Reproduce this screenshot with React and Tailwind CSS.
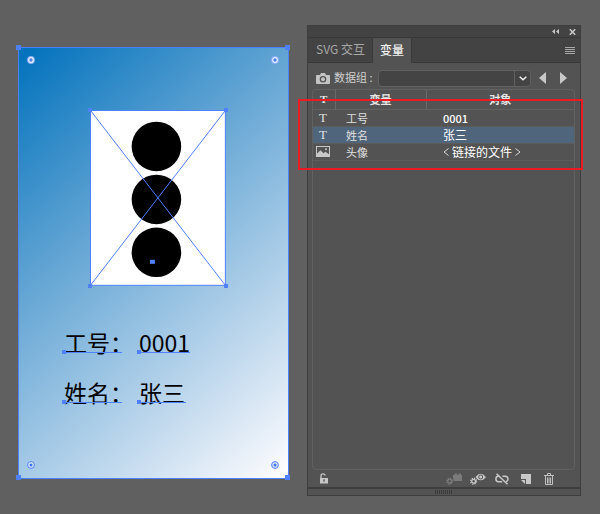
const ROWS = [
  { type: 'text', name: '工号', value: '0001', valueClass: 'font-medium text-[11px]', rowClass: '' },
  { type: 'text', name: '姓名', value: '张三', valueClass: 'text-[12px]', rowClass: 'bg-[#4f657c]' },
  { type: 'image', name: '头像', value: '链接的文件', valueClass: 'text-[12px]', rowClass: '' },
];

const FIELDS = [
  { label: '工号', value: '0001', lineClass: 'w-[51px]' },
  { label: '姓名', value: '张三', lineClass: 'w-[47px]' },
];

function Handle({ className, sizeClass = 'size-[5px]' }) {
  return <span className={'absolute bg-[#4f80ff] ' + sizeClass + ' ' + className} />;
}

function CornerWidget({ className, dot }) {
  return (
    <svg className={'absolute size-2 ' + className} viewBox="0 0 8 8" aria-hidden="true">
      {dot ? (
        <>
          <circle cx="4" cy="4" r="3.4" fill="#dce7ff" stroke="#4f80ff" strokeWidth="1" />
          <circle cx="4" cy="4" r="1.5" fill="#3f74f0" />
        </>
      ) : (
        <>
          <circle cx="4" cy="4" r="3.9" fill="#8fb0ff" />
          <circle cx="4" cy="4" r="2.3" fill="#4f80e8" stroke="#e6efff" strokeWidth="1.3" />
        </>
      )}
    </svg>
  );
}

function LinkedImage() {
  return (
    <div className="relative ml-[26.5%] w-[50.5%]">
      <svg className="block w-full" viewBox="0 0 136 176" role="img" aria-label="头像">
        <rect x="0.5" y="0.5" width="135" height="175" fill="#fff" stroke="#4f80ff" />
        <g fill="#000">
          <circle cx="66.5" cy="36.5" r="24.8" />
          <circle cx="66.5" cy="89.5" r="24.8" />
          <circle cx="66.5" cy="142.5" r="24.8" />
        </g>
        <path d="M0.5 0.5L135.5 175.5M135.5 0.5L0.5 175.5" stroke="#4f80ff" strokeWidth="1" fill="none" />
        <rect x="60" y="150" width="5" height="4" fill="#4f80ff" />
      </svg>
      <Handle sizeClass="size-1" className="-left-0.5 -top-0.5" />
      <Handle sizeClass="size-1" className="-right-0.5 -top-0.5" />
      <Handle sizeClass="size-1" className="-bottom-0.5 -left-0.5" />
      <Handle sizeClass="size-1" className="-bottom-0.5 -right-0.5" />
    </div>
  );
}

function CardText({ label, value, lineClass }) {
  return (
    <div className="flex h-[50px] items-start gap-1.5 whitespace-nowrap text-[23px] leading-[34px] text-black">
      <span className="relative">
        {label}：
        <span className="absolute left-0 top-[27px] h-px w-[58px] bg-[#4f80ff]" />
        <Handle sizeClass="size-1" className="-left-0.5 top-[25px]" />
      </span>
      <span className="relative">
        {value}
        <span className={'absolute left-0 top-[27px] h-px bg-[#4f80ff] ' + lineClass} />
        <Handle sizeClass="size-1" className="-left-0.5 top-[25px]" />
      </span>
    </div>
  );
}

function Artboard() {
  return (
    <section className="relative mt-[22px] flex aspect-[271/432] flex-[271_1_0%] flex-col self-start border border-[#4f80ff] bg-[linear-gradient(138deg,#0071bc_0%,#63a5d4_37%,#c6dcef_77%,#eef3fa_93%,#ffffff_100%)] pt-[62px]">
      <Handle className="-left-[3px] -top-[3px]" />
      <Handle className="-right-[2px] -top-[3px]" />
      <Handle className="-bottom-[2px] -left-[3px]" />
      <Handle className="-bottom-[2px] -right-[2px]" />
      <CornerWidget className="left-2 top-2" />
      <CornerWidget className="right-[9px] top-2" />
      <CornerWidget className="bottom-[9px] left-2" dot />
      <CornerWidget className="bottom-[9px] right-[9px]" dot />
      <LinkedImage />
      <div className="mt-[39px] pl-[45px]">
        {FIELDS.map((f) => (
          <CardText key={f.label} {...f} />
        ))}
      </div>
    </section>
  );
}

function CameraIcon() {
  return (
    <svg className="h-[11px] w-[14px] shrink-0" viewBox="0 0 14 11" aria-hidden="true">
      <path fillRule="evenodd" fill="#c4c4c4" d="M1 2h3l1-2h4l1 2h3q1 0 1 1v7q0 1-1 1H1q-1 0-1-1V3q0-1 1-1zM7 3a3.3 3.3 0 1 0 0 6.6A3.3 3.3 0 0 0 7 3zM7 4.3a2 2 0 1 1 0 4 2 2 0 0 1 0-4z" />
    </svg>
  );
}

function PictureIcon() {
  return (
    <svg className="block h-[11px] w-[14px]" viewBox="0 0 14 11" aria-label="图像">
      <rect x="0.5" y="0.5" width="13" height="10" fill="none" stroke="#c8c8c8" />
      <path d="M1 10V7.500L4.500 4.200l3 3L9.300 5.800 13 8.300V10z" fill="#c8c8c8" />
      <circle cx="10" cy="3.3" r="1" fill="#c8c8c8" />
    </svg>
  );
}

function Gear({ color }) {
  return (
    <g stroke={color} fill="none">
      <circle cx="3.600" cy="8.200" r="1.900" strokeWidth="1.300" />
      <circle cx="3.600" cy="8.200" r="3" strokeWidth="1.200" strokeDasharray="1.300 1.056" />
    </g>
  );
}

function IconButton({ label, children, className = '' }) {
  return (
    <button type="button" aria-label={label} className={'flex items-center justify-center ' + className}>
      {children}
    </button>
  );
}

function PanelFooter() {
  return (
    <div className="flex h-[17px] items-center justify-between pl-[11px] pr-[26px]">
      <IconButton label="锁定">
        <svg className="h-[11px] w-[10px]" viewBox="0 0 10 11">
          <path d="M2 5V2.8C2 .4 6 .4 6 2.4" fill="none" stroke="#c8c8c8" strokeWidth="1.3" />
          <path fillRule="evenodd" fill="#c8c8c8" d="M1 5h8v5.500H1zM4.400 6.300v2.400h1.300V6.300z" />
        </svg>
      </IconButton>
      <div className="flex items-center gap-2">
        <IconButton label="动态对象">
          <svg className="h-3 w-4" viewBox="0 0 16 12">
            <Gear color="#7b7b7b" />
            <path fill="#7b7b7b" d="M7 2h1.500V.500h2.500V2h1.500V.500H15V2h1v6H7.500V5.500H7z" />
          </svg>
        </IconButton>
        <IconButton label="动态可见性">
          <svg className="h-3 w-4" viewBox="0 0 16 12">
            <Gear color="#c8c8c8" />
            <path fill="#c8c8c8" d="M5.500 4.200Q10.500-2.500 16 4.200Q10.500 10.500 5.500 4.200z" />
            <circle cx="10.700" cy="4" r="2" fill="none" stroke="#535353" strokeWidth="1" />
          </svg>
        </IconButton>
        <IconButton label="取消绑定变量" className="ml-px">
          <svg className="h-3 w-[14px]" viewBox="0 0 14 12" fill="none" stroke="#c8c8c8" strokeWidth="1.500">
            <path d="M5 3.300H3.600A2.700 2.700 0 0 0 3.600 8.700h3.600M7.500 3.300H10.300a2.700 2.700 0 0 1 .700 5.300M1.500.800L12.500 11.300" />
          </svg>
        </IconButton>
        <IconButton label="新建变量" className="ml-1">
          <svg className="h-[10px] w-[10px]" viewBox="0 0 10 10">
            <path fill="#c8c8c8" d="M0 0h10v10H5V5H0z" />
            <path fill="#c8c8c8" d="M0 6h4v4z" />
          </svg>
        </IconButton>
        <IconButton label="删除变量" className="ml-[5px]">
          <svg className="h-[12px] w-[10px]" viewBox="0 0 10 12" fill="none" stroke="#c0c0c0">
            <path d="M0 2.500h10M3.500 2.500V.500h3v2M1.500 3v8.500h7V3M3.500 4.500v6M5 4.500v6M6.500 4.500v6" />
          </svg>
        </IconButton>
      </div>
    </div>
  );
}

function VariablesTable() {
  return (
    <div className="ml-1 mr-[5px] flex-1 rounded-sm border border-[#616161]">
      <table className="w-full table-fixed border-collapse text-left">
        <colgroup>
          <col className="w-[22px]" />
          <col className="w-[91px]" />
          <col />
        </colgroup>
        <thead>
          <tr className="h-[19px] border-b border-[#616161] text-center text-[11px] leading-[18px] text-[#e6e6e6]">
            <th className="border-r border-[#6a6a6a] p-0 font-['Liberation_Serif',serif] font-bold">T</th>
            <th className="border-r border-[#6a6a6a] p-0 font-bold">变量</th>
            <th className="p-0 font-bold">对象</th>
          </tr>
        </thead>
        <tbody>
          {ROWS.map((r) => (
            <tr key={r.name} className={'h-[17px] border-b border-[#5c5c5c] text-[#e0e0e0] ' + r.rowClass}>
              <td className="py-0 pl-[3px] pr-[5px] text-center font-['Liberation_Serif',serif] text-[13px] leading-4">
                {r.type === 'text' ? 'T' : <PictureIcon />}
              </td>
              <td className="p-0 pl-[11px] text-[11px] leading-4">{r.name}</td>
              <td className={'p-0 pl-[17px] leading-4 text-white ' + r.valueClass}>
                {r.type === 'image' ? (
                  <span className="flex items-center gap-[3px]">
                    <svg className="h-2 w-[6px]" viewBox="0 0 6 8" fill="none" stroke="#d8d8d8"><path d="M5.500.500L1 4l4.500 3.500" /></svg>
                    {r.value}
                    <svg className="h-2 w-[6px]" viewBox="0 0 6 8" fill="none" stroke="#d8d8d8"><path d="M.500.500L5 4 .500 7.500" /></svg>
                  </span>
                ) : (
                  r.value
                )}
              </td>
            </tr>
          ))}
        </tbody>
      </table>
    </div>
  );
}

function VariablesPanel() {
  return (
    <aside className="relative flex flex-[274_1_0%] flex-col border border-[#3e3e3e] bg-[#535353]">
      <div className="flex h-3 items-center justify-end gap-2 border-b border-[#383838] bg-[#434343] pr-1">
        <IconButton label="折叠" className="mr-0.5">
          <svg className="h-[5px] w-[7px]" viewBox="0 0 7 5" fill="#c8c8c8"><path d="M3 0v5L0 2.500zM7 0v5L4 2.500z" /></svg>
        </IconButton>
        <IconButton label="关闭">
          <svg className="h-[6px] w-[7px]" viewBox="0 0 7 6" stroke="#c8c8c8" strokeWidth="1.600"><path d="M.800.300l5.400 5.400M6.200.300L.800 5.700" /></svg>
        </IconButton>
      </div>
      <div role="tablist" className="flex h-[25px] items-stretch bg-[#434343] text-[12px]">
        <button type="button" role="tab" aria-selected="false" className="border-b border-r border-[#383838] pb-0.5 pl-2 pr-[7px] text-[#a8a8a8]">
          SVG 交互
        </button>
        <button type="button" role="tab" aria-selected="true" className="bg-[#535353] px-[7px] pb-0.5 font-medium text-[#f0f0f0]">
          变量
        </button>
        <div className="flex flex-1 items-center justify-end border-b border-l border-[#383838] pr-[5px]">
          <IconButton label="面板菜单">
            <svg className="h-[7px] w-[10px]" viewBox="0 0 10 7" stroke="#a8a8a8"><path d="M0 .500h10M0 2.500h10M0 4.500h10M0 6.500h10" /></svg>
          </IconButton>
        </div>
      </div>
      <div className="flex h-[26px] items-center pl-2 pr-[13px] pt-1">
        <CameraIcon />
        <label htmlFor="dataset" className="ml-1 w-11 shrink-0 whitespace-nowrap pb-0.5 text-[11px] leading-4 text-[#d0d0d0]">数据组 :</label>
        <div className="relative flex-1">
          <select id="dataset" className="block h-[17px] w-full appearance-none rounded-sm border border-[#616161] bg-[#444444] text-[11px] text-[#e0e0e0]" defaultValue="">
            <option value=""></option>
          </select>
          <span className="pointer-events-none absolute inset-y-0 right-0 flex w-[17px] items-center justify-center border-l border-[#616161]">
            <svg className="h-[5px] w-[8px]" viewBox="0 0 8 5" fill="none" stroke="#f0f0f0" strokeWidth="1.500"><path d="M.700.700L4 3.800 7.300.700" /></svg>
          </span>
        </div>
        <IconButton label="上一数据组" className="ml-2">
          <svg className="h-[12px] w-[7px]" viewBox="0 0 7 12" fill="#c8c8c8"><path d="M7 0v12L0 6z" /></svg>
        </IconButton>
        <IconButton label="下一数据组" className="ml-[14px]">
          <svg className="h-[12px] w-[7px]" viewBox="0 0 7 12" fill="#c8c8c8"><path d="M0 0v12l7-6z" /></svg>
        </IconButton>
      </div>
      <VariablesTable />
      <PanelFooter />
      <div className="flex h-2 items-center justify-center border-t-2 border-[#3e3e3e]">
        <span className="h-1 w-[18px] bg-[repeating-linear-gradient(90deg,#3a3a3a_0_1px,#535353_1px_2px)]" />
      </div>
      <div className="pointer-events-none absolute -left-[10px] -right-[3px] top-[73px] h-[71px] border-2 border-[#ec1c24]" />
    </aside>
  );
}

export default function App() {
  return (
    <main className="flex min-h-screen gap-[18px] bg-[#606060] pb-[18px] pl-[18px] pr-[19px] pt-[25px] font-['Noto_Sans_CJK_SC',sans-serif]">
      <Artboard />
      <VariablesPanel />
    </main>
  );
}
